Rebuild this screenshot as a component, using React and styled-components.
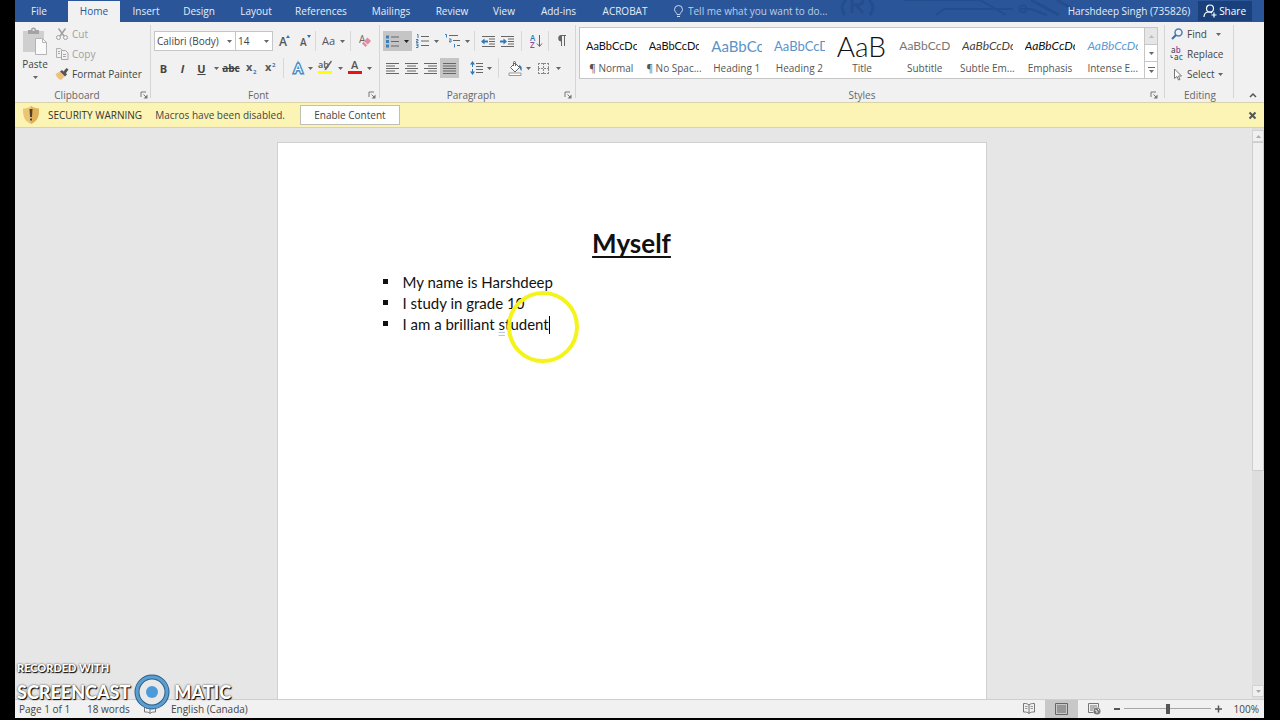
import React, { useState } from 'react'
import styled, { createGlobalStyle, css } from 'styled-components'

const GlobalStyle = createGlobalStyle`
  * {
    box-sizing: border-box;
  }
  body {
    margin: 0;
    background: #000;
    color: #444;
    font-family: 'Open Sans', 'Noto Sans', sans-serif;
    font-size: 10px;
  }
  button, select, input {
    font: inherit;
    color: inherit;
    margin: 0;
  }
`

const Shell = styled.div`
  position: relative;
  display: flex;
  flex-direction: column;
  height: 100vh;
  padding: 0 16px 2px 15px;
  overflow: hidden;
`

/* title / tabs */

const TabBar = styled.header`
  position: relative;
  display: flex;
  align-items: stretch;
  height: 22px;
  flex: none;
  background: #2a5699;
  color: #e6edf7;
`

const Circuit = styled.svg`
  position: absolute;
  right: 175px;
  top: 0;
`

const TabList = styled.nav`
  display: flex;
`

const Tab = styled.button`
  width: ${(p) => p.$w}px;
  padding: 0;
  border: 0;
  border-top: 1px solid #2a5699;
  line-height: 19px;
  white-space: nowrap;
  background: ${(p) => (p.$active ? '#f1f1f1' : 'transparent')};
  color: ${(p) => (p.$active ? '#2a5699' : '#e6edf7')};
  &:first-child {
    margin-right: 5px;
  }
`

const TellMe = styled.label`
  display: flex;
  align-items: center;
  gap: 5px;
  margin-left: 11px;
  color: #bccde6;
`

const TellMeInput = styled.input`
  width: 150px;
  padding: 0;
  border: 0;
  outline: 0;
  background: transparent;
  &::placeholder {
    color: #bccde6;
    opacity: 1;
  }
`

const Account = styled.div`
  position: relative;
  display: flex;
  align-items: center;
  gap: 8px;
  margin-left: auto;
  padding-right: 12px;
`

const ShareButton = styled.button`
  display: flex;
  align-items: center;
  gap: 2px;
  height: 20px;
  padding: 0 6px 0 5px;
  border: 0;
  background: #19407a;
  color: #fff;
`

/* ribbon */

const Ribbon = styled.section`
  display: flex;
  flex: none;
  height: 80px;
  background: #f1f1f1;
`

const Rule = styled.div`
  flex: none;
  width: 1px;
  margin: 3px 0 4px;
  background: #d5d5d5;
`

const Group = styled.div`
  display: flex;
  flex-direction: column;
  flex: ${(p) => (p.$grow ? '1 1 0' : 'none')};
  min-width: 0;
  width: ${(p) => (p.$w ? `${p.$w}px` : 'auto')};
  padding: ${(p) => p.$pad || '9px 3px 0'};
`

const GroupFooter = styled.div`
  display: flex;
  align-items: center;
  height: 14px;
  margin: auto -2px 0 -5px;
  color: #666;
  span {
    flex: 1;
    text-align: center;
  }
`

const Launcher = styled.button`
  display: flex;
  padding: 0;
  border: 0;
  width: 10px;
  background: transparent;
`

const ToolRow = styled.div`
  display: flex;
  align-items: center;
  height: 20px;
  & + & {
    margin-top: 7px;
  }
`

const ToolSep = styled.div`
  flex: none;
  width: 1px;
  height: 20px;
  margin: 0 ${(p) => p.$gap || 0}px;
  background: ${(p) => (p.$clear ? 'transparent' : '#d8d8d8')};
`

const Tool = styled.button`
  display: flex;
  align-items: center;
  justify-content: center;
  flex: none;
  width: ${(p) => p.$w || 19}px;
  height: 20px;
  padding: 0;
  border: 0;
  background: ${(p) => (p.$on ? '#c5c5c5' : 'transparent')};
  ${(p) =>
    p.$glyph &&
    css`
      font-size: 11px;
      font-weight: 700;
    `}
  svg {
    flex: none;
  }
`

const ComboBox = styled.span`
  position: relative;
  display: flex;
  flex: none;
  width: ${(p) => p.$w}px;
  height: 20px;
  & + & {
    margin-left: -1px;
  }
  svg {
    position: absolute;
    right: 4px;
    top: 9px;
    pointer-events: none;
  }
`

const ComboSelect = styled.select`
  appearance: none;
  width: 100%;
  padding: 0 2px;
  border: 1px solid #c6c6c6;
  border-radius: 0;
  background: #fff;
`

const ClipboardBody = styled.div`
  display: flex;
  gap: 4px;
`

const PasteButton = styled.button`
  display: flex;
  flex-direction: column;
  align-items: center;
  width: 32px;
  padding: 3px 0 0;
  border: 0;
  background: transparent;
  line-height: 14px;
  svg + span {
    margin: 2px 0 5px;
  }
`

const Stack = styled.div`
  display: flex;
  flex-direction: column;
  align-items: flex-start;
`

const LineButton = styled.button`
  display: flex;
  align-items: center;
  gap: 3px;
  height: 20px;
  padding: 0;
  border: 0;
  white-space: nowrap;
  background: transparent;
  color: ${(p) => (p.$muted ? '#a0a0a0' : '#444')};
  svg:first-child {
    width: 14px;
  }
`

const LineText = styled.span`
  width: ${(p) => (p.$w ? `${p.$w}px` : 'auto')};
  text-align: left;
`

const Gallery = styled.div`
  display: flex;
  height: 52px;
  border: 1px solid #c6c6c6;
  background: #fff;
`

const StyleCell = styled.button`
  display: flex;
  flex-direction: column;
  align-items: center;
  flex: 1 1 0;
  min-width: 0;
  padding: 5px 6px 0;
  border: 0;
  background: transparent;
`

const StyleSample = styled.span`
  display: flex;
  align-items: center;
  width: 100%;
  height: 26px;
  margin-bottom: 2px;
  overflow: hidden;
  white-space: nowrap;
  font-family: Lato, 'Open Sans', sans-serif;
  font-size: ${(p) => p.$size || 11}px;
  font-weight: ${(p) => p.$weight || 400};
  font-style: ${(p) => (p.$italic ? 'italic' : 'normal')};
  line-height: 24px;
  color: ${(p) => p.$color || '#111'};
`

const StyleName = styled.span`
  line-height: 14px;
  white-space: nowrap;
  color: #555;
`

const GalleryScroll = styled.div`
  display: flex;
  flex-direction: column;
  width: 13px;
  flex: none;
  border-left: 1px solid #c6c6c6;
`

const GalleryButton = styled.button`
  display: flex;
  align-items: center;
  justify-content: center;
  flex: 1;
  padding: 0;
  border: 0;
  background: ${(p) => (p.$off ? '#e6e6e6' : '#fff')};
  & + & {
    border-top: 1px solid #c6c6c6;
  }
`

const CollapseButton = styled.button`
  display: flex;
  align-self: flex-end;
  justify-content: center;
  margin-left: auto;
  width: 30px;
  padding: 0 0 4px 8px;
  border: 0;
  background: transparent;
`

/* message bar */

const MessageBar = styled.div`
  display: flex;
  align-items: center;
  flex: none;
  height: 26px;
  padding: 0 7px;
  border-top: 1px solid #d9d4a8;
  border-bottom: 1px solid #d9d4a8;
  background: #fbf4b4;
  strong {
    margin: 0 13px 0 8px;
    font-weight: 400;
    color: #333;
  }
`

const EnableButton = styled.button`
  width: 100px;
  height: 20px;
  margin-left: 15px;
  padding: 0;
  border: 1px solid #c0bfb4;
  background: #fff;
`

const CloseButton = styled.button`
  display: flex;
  margin-left: auto;
  padding: 0;
  border: 0;
  background: transparent;
`

/* document */

const Workspace = styled.main`
  display: flex;
  flex: 1;
  min-height: 0;
  background: #e6e6e6;
`

const Canvas = styled.div`
  display: flex;
  justify-content: center;
  flex: 1;
  padding: 14px 4px 0 0;
  overflow: hidden;
`

const Paper = styled.article`
  position: relative;
  width: 100%;
  max-width: 710px;
  padding: 83px 83px 0;
  border: 1px solid #d0d0d0;
  border-bottom: 0;
  background: #fff;
  color: #111;
  font-family: Lato, 'Open Sans', sans-serif;
`

const Heading = styled.h1`
  margin: 0 0 12px;
  text-align: center;
  font-size: 26px;
  line-height: 34px;
  text-decoration: underline;
  text-decoration-thickness: 2px;
  text-decoration-skip-ink: none;
  text-underline-offset: 3px;
`

const Bullets = styled.ul`
  margin: 0;
  padding: 0 0 0 22px;
  list-style: none;
  font-size: 15px;
  line-height: 21px;
`

const Bullet = styled.li`
  display: flex;
  align-items: center;
  &::before {
    content: '';
    width: 5px;
    height: 5px;
    margin: 0 15px 2px 0;
    background: #111;
  }
`

const Flagged = styled.span`
  text-decoration: underline double #b9c8e2;
  text-underline-offset: 2px;
`

const Caret = styled.span`
  width: 1px;
  height: 18px;
  background: #000;
`

const PointerHalo = styled.div`
  position: absolute;
  left: 229px;
  top: 148px;
  width: 72px;
  height: 72px;
  border: 4px solid #f4f41c;
  border-radius: 50%;
`

const ScrollTrack = styled.div`
  display: flex;
  flex-direction: column;
  flex: none;
  width: 12px;
  padding: 2px 0;
  background: #dedede;
`

const ScrollButton = styled.button`
  display: flex;
  align-items: center;
  justify-content: center;
  height: 12px;
  padding: 0;
  border: 1px solid #d2d2d2;
  background: #f0f0f0;
`

const ScrollThumb = styled.div`
  flex: 0 1 58%;
  margin-bottom: auto;
  border: 1px solid #cdcdcd;
  background: #f0f0f0;
`

/* status bar */

const StatusBar = styled.footer`
  display: flex;
  align-items: center;
  flex: none;
  height: 19px;
  padding: 0 5px 1px 4px;
  border-top: 1px solid #cfcfcf;
  background: #f1f1f1;
`

const StatusItem = styled.span`
  width: ${(p) => (p.$w ? `${p.$w}px` : 'auto')};
  white-space: nowrap;
  svg {
    display: block;
  }
`

const ViewTools = styled.div`
  display: flex;
  align-items: center;
  margin-left: auto;
`

const ViewButton = styled.button`
  display: flex;
  align-items: center;
  justify-content: center;
  width: 33px;
  height: 18px;
  padding: 0;
  border: 0;
  background: ${(p) => (p.$on ? '#c8c8c8' : 'transparent')};
`

const ZoomButton = styled.button`
  display: flex;
  padding: 0;
  border: 0;
  background: transparent;
`

const ZoomRange = styled.input`
  appearance: none;
  width: 87px;
  height: 10px;
  margin: 0 3px;
  background: linear-gradient(#a8a8a8, #a8a8a8) center / 100% 1px no-repeat;
  &::-webkit-slider-thumb {
    appearance: none;
    width: 4px;
    height: 10px;
    background: #555;
  }
`

const ZoomLabel = styled.span`
  width: 37px;
  text-align: right;
`

/* recorder mark */

const Watermark = styled.div`
  position: absolute;
  left: 17px;
  bottom: 10px;
  color: #fff;
  font-family: Lato, sans-serif;
  font-weight: 900;
  text-shadow: 1px 1px 1px #000, 0 0 2px #333;
  pointer-events: none;
`

const WatermarkSmall = styled.div`
  font-size: 11px;
  line-height: 12px;
`

const WatermarkLarge = styled.div`
  display: flex;
  align-items: center;
  gap: 4px;
  font-size: 18px;
  line-height: 20px;
`

const Drawing = styled.svg`
  overflow: visible;
`

const Icon = ({ w = 14, h = w, children }) => (
  <Drawing width={w} height={h} viewBox={`0 0 ${w} ${h}`} fill='none' aria-hidden='true'>
    {children}
  </Drawing>
)

const Down = ({ color = '#666' }) => (
  <Icon w={5} h={3}>
    <path d='M0 0h5L2.5 3z' fill={color} />
  </Icon>
)

const Drop = ({ w = 8, on, label }) => (
  <Tool $w={w} $on={on} aria-label={label}>
    <Down color={on ? '#222' : '#666'} />
  </Tool>
)

const Lines = ({ rows }) => (
  <Icon w={13} h={11}>
    {rows.map(([x, w], i) => (
      <path key={i} d={`M${x} ${i * 2.5 + 0.5}h${w}`} stroke='#666' />
    ))}
  </Icon>
)

const full = [0, 13]
const aligns = {
  left: [full, [0, 9], full, [0, 9], full],
  center: [full, [2, 9], full, [2, 9], full],
  right: [full, [4, 9], full, [4, 9], full],
  justify: [full, full, full, full, full]
}

const GroupLabel = ({ children, launcher = true }) => (
  <GroupFooter>
    <span>{children}</span>
    {launcher && (
      <Launcher aria-label={`${children} settings`}>
        <Icon w={8}>
          <path d='M1 6V1h5M3.5 3.5L6.5 6.5' stroke='#777' />
          <path d='M7.5 3.5v4h-4z' fill='#777' />
        </Icon>
      </Launcher>
    )}
  </GroupFooter>
)

const Clipboard = () => (
  <Group $w={135} $pad='2px 2px 0 4px'>
    <ClipboardBody>
      <PasteButton>
        <Icon w={24} h={28}>
          <path d='M0 4h21v21H0z' fill='#cfcfcf' />
          <path d='M5 3h3a2.5 2.5 0 0 1 5 0h3v4H5z' fill='#a4a4a4' />
          <circle cx='10.5' cy='3' r='1' fill='#f1f1f1' />
          <path d='M12.5 11.5h7l4 4v12h-11z' fill='#fafafa' stroke='#b4b4b4' />
          <path d='M19.5 11.5v4h4' stroke='#b4b4b4' />
        </Icon>
        <span>Paste</span>
        <Down />
      </PasteButton>
      <Stack>
        <LineButton $muted>
          <Icon w={14} h={12}>
            <path d='M3.5 0.5L9 8M10.5 0.5L5 8' stroke='#a0a0a0' strokeWidth='1.5' />
            <circle cx='3.5' cy='9.5' r='2' stroke='#a0a0a0' />
            <circle cx='10.5' cy='9.5' r='2' stroke='#a0a0a0' />
          </Icon>
          Cut
        </LineButton>
        <LineButton $muted>
          <Icon w={14} h={12}>
            <path d='M6 9.5H1.5v-9h4l2 2' stroke='#b0b0b0' />
            <path d='M6.5 2.5h4l2.5 2.5v6.5H6.5zM8 6.5h3M8 8.5h3M3 3.5h2M3 5.5h2' stroke='#a8a8a8' />
          </Icon>
          Copy
        </LineButton>
        <LineButton>
          <Icon w={14} h={12}>
            <path d='M0.5 6L5 3.5l4.5 5L6 12C3 11 1.5 9 0.5 6z' fill='#efc078' />
            <path d='M5 3.5l2-1.5 1.5 1.5L11.5 0l2 1.5-2.5 3.5 1 1.5-2 2z' fill='#555' />
          </Icon>
          Format Painter
        </LineButton>
      </Stack>
    </ClipboardBody>
    <GroupLabel>Clipboard</GroupLabel>
  </Group>
)

const FontGroup = () => (
  <Group $w={228}>
    <ToolRow>
      <ComboBox $w={82}>
        <ComboSelect aria-label='Font' defaultValue='Calibri (Body)'>
          <option>Calibri (Body)</option>
        </ComboSelect>
        <Down />
      </ComboBox>
      <ComboBox $w={38}>
        <ComboSelect aria-label='Font size' defaultValue='14'>
          <option>14</option>
        </ComboSelect>
        <Down />
      </ComboBox>
      <Tool $w={22} aria-label='Increase font size'>
        <Icon w={11} h={14}>
          <text x='0' y='12' fontSize='12' fontWeight='600' fill='#555'>A</text>
          <path d='M7 4h4L9 1z' fill='#3a78a8' />
        </Icon>
      </Tool>
      <Tool $w={20} aria-label='Decrease font size'>
        <Icon w={11} h={14}>
          <text x='0' y='12' fontSize='10' fontWeight='600' fill='#555'>A</text>
          <path d='M7 1h4L9 4z' fill='#2f6fb5' />
        </Icon>
      </Tool>
      <ToolSep />
      <Tool $w={34} aria-label='Change case'>
        <Icon w={23} h={14}>
          <text x='0' y='11' fontSize='11' fill='#555'>Aa</text>
          <path d='M18 6h5l-2.5 3z' fill='#666' />
        </Icon>
      </Tool>
      <ToolSep />
      <Tool $w={27} aria-label='Clear formatting'>
        <Icon w={12} h={14}>
          <text x='0' y='9' fontSize='10' fill='#666'>A</text>
          <path d='M3 9.500L8.500 3.500 12 7 6.500 13z' fill='#e58a9b' />
          <path d='M5 7.500l3.500 3.500' stroke='#fff' />
        </Icon>
      </Tool>
    </ToolRow>
    <ToolRow>
      <Tool $glyph>B</Tool>
      <Tool $glyph><i>I</i></Tool>
      <Tool $glyph><u>U</u></Tool>
      <Drop w={10} label='Underline style' />
      <Tool $w={20}><s><b>abc</b></s></Tool>
      <Tool aria-label='Subscript'>
        <Icon w={10} h={12}>
          <text x='0' y='9' fontSize='11' fontWeight='700' fill='#555'>x</text>
          <text x='7' y='12' fontSize='6' fontWeight='700' fill='#3a78b8'>2</text>
        </Icon>
      </Tool>
      <Tool aria-label='Superscript'>
        <Icon w={10} h={12}>
          <text x='0' y='9' fontSize='11' fontWeight='700' fill='#555'>x</text>
          <text x='7' y='5' fontSize='6' fontWeight='700' fill='#3a78b8'>2</text>
        </Icon>
      </Tool>
      <ToolSep $gap={4} />
      <Tool aria-label='Text effects'>
        <Icon w={10} h={14}>
          <text x='1' y='12' fontSize='13' fill='#fff' stroke='#4a8cc4' strokeWidth='3' paintOrder='stroke'>A</text>
        </Icon>
      </Tool>
      <Drop w={7} label='Text effects options' />
      <Tool $w={22} aria-label='Highlight'>
        <Icon w={15} h={16}>
          <text x='0' y='8' fontSize='9' fontWeight='600' fill='#555'>ab</text>
          <path d='M14 1.500L8.500 9.500l-2 1 .5-2.500 6-7.500z' fill='#666' />
          <path d='M0 11h14v3H0z' fill='#ffff00' />
        </Icon>
      </Tool>
      <Drop w={9} label='Highlight color' />
      <Tool $w={20} aria-label='Font color'>
        <Icon w={14} h={16}>
          <text x='3' y='9' fontSize='11' fontWeight='600' fill='#555'>A</text>
          <path d='M0 11h14v3H0z' fill='#ee1111' />
        </Icon>
      </Tool>
      <Drop w={9} label='Font color options' />
    </ToolRow>
    <GroupLabel>Font</GroupLabel>
  </Group>
)

const IndentIcon = ({ out }) => (
  <Icon w={15} h={11}>
    <path d='M1 0.5h13M8 3h6M8 5.5h6M8 8h6M1 10.5h13' stroke='#666' />
    {out ? (
      <path d='M0 5.5L3.5 2.5v2H7v2H3.5v2z' fill='#2f78b7' />
    ) : (
      <path d='M7 5.5L3.5 2.5v2H0v2h3.5v2z' fill='#2f78b7' />
    )}
  </Icon>
)

const Paragraph = () => (
  <Group $w={195}>
    <ToolRow>
      <Tool $w={18} $on aria-label='Bullets'>
        <Icon w={13} h={13}>
          <path d='M5 2h8M5 6.5h8M5 11h8' stroke='#666' />
          <path d='M0 0.5h3v3H0zM0 5h3v3H0zM0 9.5h3v3H0z' fill='#3f7fb5' />
        </Icon>
      </Tool>
      <Drop w={11} on label='Bullet library' />
      <Tool $w={20} aria-label='Numbering'>
        <Icon w={13} h={14}>
          <path d='M5 2.5h8M5 7h8M5 11.5h8' stroke='#666' />
          <path d='M1 0.5h1v3.500M0 5.5h2v1.5H0.5v1.5H2.5M0 10h2v3.5H0M0.5 11.5H2' stroke='#3f7fb5' />
        </Icon>
      </Tool>
      <Drop label='Number library' />
      <Tool $w={24} aria-label='Multilevel list'>
        <Icon w={15} h={14}>
          <path d='M4 1.5h9M8 6.5h7M12 11.5h3' stroke='#666' />
          <path d='M0 0.5h1.5v3M4 5h2v3H4.5V6.5M9.5 10v3.5' stroke='#3f7fb5' />
        </Icon>
      </Tool>
      <Drop w={6} label='List library' />
      <ToolSep $gap={4} />
      <Tool aria-label='Decrease indent'><IndentIcon out /></Tool>
      <Tool aria-label='Increase indent'><IndentIcon /></Tool>
      <ToolSep $gap={4} />
      <Tool aria-label='Sort'>
        <Icon w={12} h={14}>
          <text x='0' y='7' fontSize='8' fontWeight='600' fill='#2f78b7'>A</text>
          <text x='0' y='14' fontSize='8' fontWeight='600' fill='#8a4da0'>Z</text>
          <path d='M9.5 1v11M7 9.500l2.5 3 2.5-3' stroke='#666' />
        </Icon>
      </Tool>
      <ToolSep $gap={3} />
      <Tool aria-label='Show marks'>
        <Icon w={9} h={12}>
          <path d='M4.5 1v10M7.5 1v10M3.5 0.5H9' stroke='#666' />
          <path d='M4.5 0a3 3 0 0 0 0 6.5z' fill='#666' />
        </Icon>
      </Tool>
    </ToolRow>
    <ToolRow>
      <Tool aria-label='Align left'><Lines rows={aligns.left} /></Tool>
      <Tool aria-label='Center'><Lines rows={aligns.center} /></Tool>
      <Tool aria-label='Align right'><Lines rows={aligns.right} /></Tool>
      <Tool $on aria-label='Justify'><Lines rows={aligns.justify} /></Tool>
      <ToolSep $gap={3} $clear />
      <Tool $w={20} aria-label='Line spacing'>
        <Icon w={13} h={14}>
          <path d='M6 2.5h7M6 5.5h7M6 8.5h7M6 11.5h7' stroke='#666' />
          <path d='M2.5 0L5 3.5H0zM2.5 14L0 10.5h5zM2 3h1v3H2zM2 8h1v3H2z' fill='#2f78b7' />
        </Icon>
      </Tool>
      <Drop w={6} label='Line spacing options' />
      <ToolSep $gap={6} />
      <Tool $w={20} aria-label='Shading'>
        <Icon w={15} h={15}>
          <path d='M2.5 6.5L7 2l4.5 4.5L7 11z' fill='#fff' stroke='#666' />
          <path d='M5.5 5V1.5a1 1 0 0 1 2 0V5' stroke='#666' />
          <path d='M11 4c3 1 3 3 2.5 6-1.5-1-1-2.5-2.5-3.5z' fill='#2f78b7' />
          <path d='M1 12h12v2.500H1z' fill='#fff' stroke='#999' />
        </Icon>
      </Tool>
      <Drop w={6} label='Shading color' />
      <Tool $w={24} aria-label='Borders'>
        <Icon w={11} h={11}>
          <path d='M0.5 0v11M5.5 0v11M10.5 0v11M0 0.5h11M0 5.5h11M0 10.5h11' stroke='#888' strokeDasharray='2 1' />
        </Icon>
      </Tool>
      <Drop w={6} label='Border options' />
    </ToolRow>
    <GroupLabel>Paragraph</GroupLabel>
  </Group>
)

const gallery = [
  { name: '¶ Normal', sample: 'AaBbCcDc' },
  { name: '¶ No Spac...', sample: 'AaBbCcDc' },
  { name: 'Heading 1', sample: 'AaBbCc', size: 15, color: '#5c93c6' },
  { name: 'Heading 2', sample: 'AaBbCcD', size: 13, color: '#5c93c6' },
  { name: 'Title', sample: 'AaB', size: 28, weight: 300 },
  { name: 'Subtitle', sample: 'AaBbCcD', size: 12, color: '#777' },
  { name: 'Subtle Em...', sample: 'AaBbCcDc', size: 12, italic: true, color: '#444' },
  { name: 'Emphasis', sample: 'AaBbCcDc', size: 12, italic: true },
  { name: 'Intense E...', sample: 'AaBbCcDc', size: 12, italic: true, color: '#5b9bd5' }
]

const Styles = () => (
  <Group $grow $pad='5px 6px 0 3px'>
    <Gallery>
      {gallery.map((s) => (
        <StyleCell key={s.name}>
          <StyleSample $size={s.size} $weight={s.weight} $italic={s.italic} $color={s.color}>
            {s.sample}
          </StyleSample>
          <StyleName>{s.name}</StyleName>
        </StyleCell>
      ))}
      <GalleryScroll>
        <GalleryButton $off aria-label='Previous styles'>
          <Icon w={5} h={3}><path d='M0 3h5L2.5 0z' fill='#bbb' /></Icon>
        </GalleryButton>
        <GalleryButton aria-label='Next styles'><Down /></GalleryButton>
        <GalleryButton aria-label='More styles'>
          <Icon w={7} h={6}><path d='M0 0.5h7' stroke='#666' /><path d='M1 3h5L3.5 6z' fill='#666' /></Icon>
        </GalleryButton>
      </GalleryScroll>
    </Gallery>
    <GroupLabel>Styles</GroupLabel>
  </Group>
)

const Editing = () => (
  <Group $w={68} $pad='2px 0 0 5px'>
    <Stack>
      <LineButton>
        <Icon w={14} h={12}>
          <circle cx='8.5' cy='4.5' r='3.5' stroke='#4a7fb5' strokeWidth='1.5' />
          <path d='M6 7L2 11' stroke='#3a6ea5' strokeWidth='2' />
        </Icon>
        <LineText $w={26}>Find</LineText>
        <Down />
      </LineButton>
      <LineButton>
        <Icon w={14} h={14}>
          <path d='M1 8v2.5h2' stroke='#2f78b7' />
          <text x='1' y='6' fontSize='8' fontWeight='600' fill='#555'>
            a<tspan fill='#8a4da0'>b</tspan>
          </text>
          <text x='4' y='13' fontSize='8' fontWeight='600' fill='#555'>
            a<tspan fill='#2f78b7'>c</tspan>
          </text>
        </Icon>
        Replace
      </LineButton>
      <LineButton>
        <Icon w={14} h={13}>
          <path d='M4.5 1v9.5l2.5-2 1.5 3.5 1.5-0.5L8.5 8h3z' fill='#fff' stroke='#777' />
        </Icon>
        Select
        <Down />
      </LineButton>
    </Stack>
    <GroupLabel launcher={false}>Editing</GroupLabel>
  </Group>
)

const tabs = [
  ['File', 48],
  ['Home', 52],
  ['Insert', 52],
  ['Design', 54],
  ['Layout', 60],
  ['References', 70],
  ['Mailings', 70],
  ['Review', 52],
  ['View', 52],
  ['Add-ins', 57],
  ['ACROBAT', 76]
]

const BookIcon = () => (
  <Icon w={12} h={11}>
    <path d='M6 2C4.5 0.5 3 0.5 0.5 0.5v8.5c2.5 0 4 0 5.5 1.5 1.5-1.5 3-1.5 5.5-1.5V0.5C9 0.5 7.5 0.5 6 2zM6 2v8.5' stroke='#777' />
    <path d='M2 3.5h2.5M2 5.5h2.5M7.5 3.5H10M7.5 5.5H10' stroke='#999' />
  </Icon>
)

const App = () => {
  const [tab, setTab] = useState('Home')
  const [showWarning, setShowWarning] = useState(true)
  const [zoom, setZoom] = useState(100)

  return (
    <Shell>
      <GlobalStyle />
      <TabBar>
        <Circuit width='260' height='22' viewBox='0 0 260 22' fill='none' aria-hidden='true'>
          <g stroke='#244d8e' strokeWidth='2'>
            <path d='M17 0c-5 4-5 10-1 15M40 0c5 4 5 10 1 15M23 0v13M23 5h4l7 8M28 5c5 0 6-3 6-5' strokeWidth='3' />
            <path d='M75 0h76l26 15M107 15l8-6h69M192 9h10l16 6' />
            <circle cx='194' cy='9' r='3.5' />
            <path d='M202 0l28 15M228 0l22 13' strokeWidth='3' />
          </g>
        </Circuit>
        <TabList>
          {tabs.map(([name, w]) => (
            <Tab key={name} $w={w} $active={name === tab} onClick={() => setTab(name)}>
              {name}
            </Tab>
          ))}
        </TabList>
        <TellMe>
          <Icon w={9} h={13}>
            <path d='M3 9.5C3 7.500 0.5 7 0.5 4.5a4 4 0 0 1 8 0C8.5 7 6 7.5 6 9.5zM3 11.5h3' stroke='#cbd9ec' />
          </Icon>
          <TellMeInput aria-label='Tell me' placeholder='Tell me what you want to do...' />
        </TellMe>
        <Account>
          <span>Harshdeep Singh (735826)</span>
          <ShareButton>
            <Icon w={14} h={14}>
              <circle cx='7' cy='4.5' r='3.5' stroke='#fff' strokeWidth='1.2' />
              <path d='M1 13c0-3 2-5 5-5 1.5 0 2.5 0.5 3 1M11 8.5v5M8.5 11h5' stroke='#fff' strokeWidth='1.2' />
            </Icon>
            Share
          </ShareButton>
        </Account>
      </TabBar>

      <Ribbon>
        <Clipboard />
        <Rule />
        <FontGroup />
        <Rule />
        <Paragraph />
        <Rule />
        <Styles />
        <Rule />
        <Editing />
        <Rule />
        <CollapseButton aria-label='Collapse ribbon'>
          <Icon w={8} h={6}><path d='M1 5l3-3 3 3' stroke='#555' strokeWidth='1.5' /></Icon>
        </CollapseButton>
      </Ribbon>

      {showWarning && (
        <MessageBar role='alert'>
          <Icon w={18} h={20}>
            <path d='M9 1c2.5 2 5 2.5 8 2.5 0 8-1 12-8 15.5C2 15.5 1 11.5 1 3.5c3 0 5.5-0.5 8-2.5z' fill='#ecc572' />
            <path d='M9 1c2.5 2 5 2.5 8 2.5 0 8-1 12-8 15.5z' fill='#e0b158' />
            <path d='M7.5 4h3l-0.5 8H8zM8 13.5h2v2H8z' fill='#4a4130' />
          </Icon>
          <strong>SECURITY WARNING</strong>
          <span>Macros have been disabled.</span>
          <EnableButton onClick={() => setShowWarning(false)}>Enable Content</EnableButton>
          <CloseButton aria-label='Close' onClick={() => setShowWarning(false)}>
            <Icon w={9}><path d='M1.5 1.5l6 6M7.5 1.5l-6 6' stroke='#555' strokeWidth='2' /></Icon>
          </CloseButton>
        </MessageBar>
      )}

      <Workspace>
        <Canvas>
          <Paper>
            <Heading>Myself</Heading>
            <Bullets>
              <Bullet>My name is Harshdeep</Bullet>
              <Bullet>I study in grade 10</Bullet>
              <Bullet>
                <span>I am a brilliant <Flagged>s</Flagged>tudent</span>
                <Caret />
              </Bullet>
            </Bullets>
            <PointerHalo />
          </Paper>
        </Canvas>
        <ScrollTrack>
          <ScrollButton aria-label='Scroll up'>
            <Icon w={5} h={3}><path d='M0 3h5L2.5 0z' fill='#aaa' /></Icon>
          </ScrollButton>
          <ScrollThumb />
          <ScrollButton aria-label='Scroll down'><Down color='#aaa' /></ScrollButton>
        </ScrollTrack>
      </Workspace>

      <StatusBar>
        <StatusItem $w={68}>Page 1 of 1</StatusItem>
        <StatusItem $w={57}>18 words</StatusItem>
        <StatusItem $w={27}><BookIcon /></StatusItem>
        <StatusItem>English (Canada)</StatusItem>
        <ViewTools>
          <ViewButton aria-label='Read mode'><BookIcon /></ViewButton>
          <ViewButton $on aria-label='Print layout'>
            <Icon w={13} h={12}>
              <path d='M0.5 0.5h12v11H0.5zM2 3h9M2 5h9M2 7h9M2 9h9' stroke='#666' />
            </Icon>
          </ViewButton>
          <ViewButton aria-label='Web layout'>
            <Icon w={13} h={12}>
              <path d='M5.5 9.5h-5v-9h10v4M2 3h7M2 5h5M2 7h3' stroke='#777' />
              <circle cx='9' cy='8' r='3.5' fill='#777' />
              <path d='M7 7l2 1 0 2M10 5.5l1 2' stroke='#eee' />
            </Icon>
          </ViewButton>
          <ZoomButton aria-label='Zoom out'>
            <Icon w={10} h={8}><path d='M3 4h6' stroke='#555' strokeWidth='2' /></Icon>
          </ZoomButton>
          <ZoomRange
            type='range'
            aria-label='Zoom'
            min='10'
            max='190'
            value={zoom}
            onChange={(e) => setZoom(Number(e.target.value))}
          />
          <ZoomButton aria-label='Zoom in'>
            <Icon w={8}><path d='M1 4h7M4.5 0.5v7' stroke='#555' strokeWidth='1.5' /></Icon>
          </ZoomButton>
          <ZoomLabel>{zoom}%</ZoomLabel>
        </ViewTools>
      </StatusBar>

      <Watermark>
        <WatermarkSmall>RECORDED WITH</WatermarkSmall>
        <WatermarkLarge>
          SCREENCAST
          <Icon w={36}>
            <circle cx='18' cy='18' r='15' fill='#e8e8e8' stroke='#2c5f8a' strokeWidth='5' />
            <circle cx='18' cy='18' r='15' stroke='#5b9fd0' strokeWidth='3' />
            <circle cx='18' cy='18' r='6' fill='#4a9bd8' />
          </Icon>
          MATIC
        </WatermarkLarge>
      </Watermark>
    </Shell>
  )
}

export default App
